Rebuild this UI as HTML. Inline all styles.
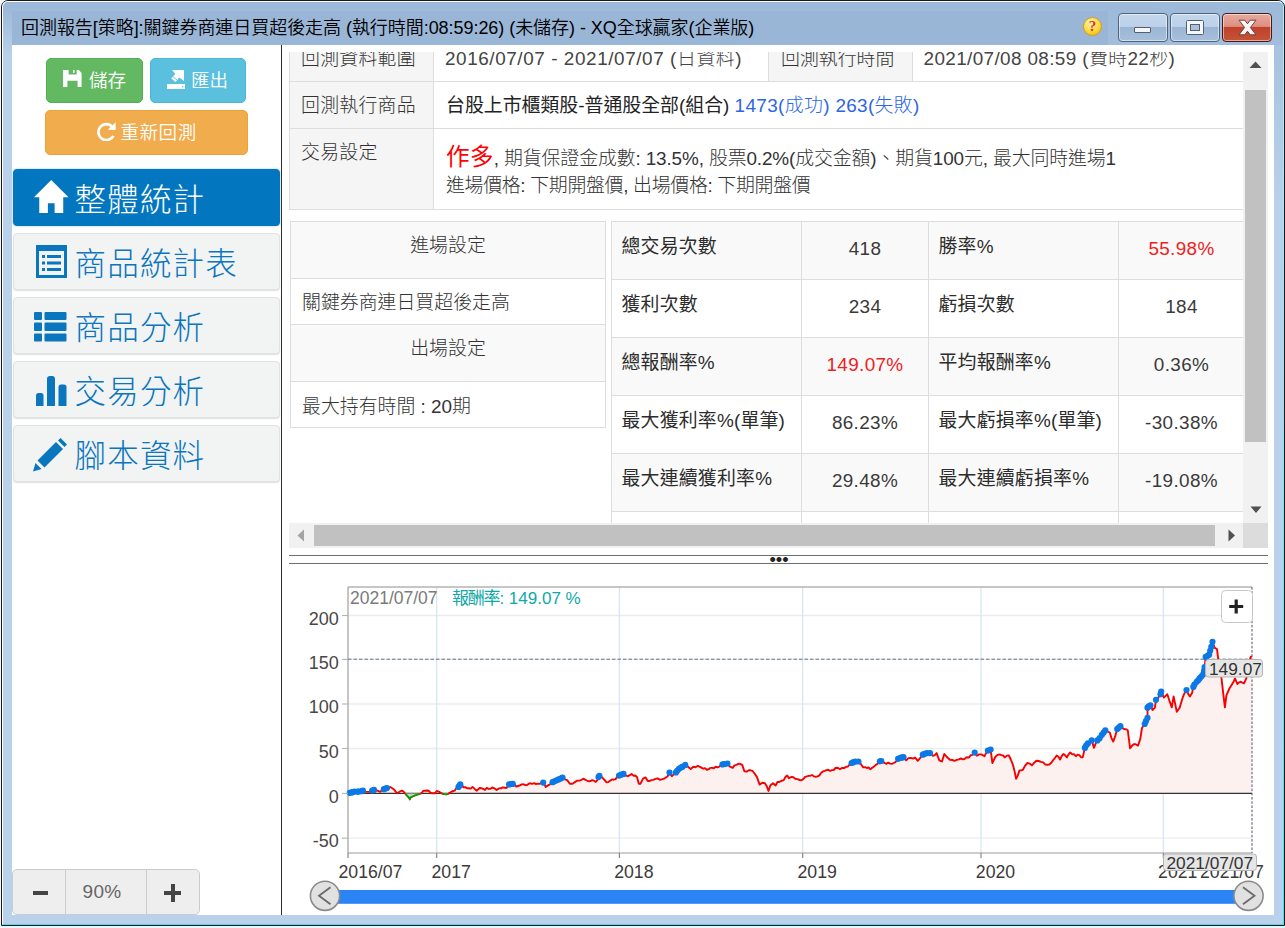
<!DOCTYPE html>
<html lang="zh-Hant">
<head>
<meta charset="utf-8">
<title>回測報告</title>
<style>
*{box-sizing:border-box;margin:0;padding:0}
html,body{width:1285px;height:928px;overflow:hidden;background:#eaf6fb}
body{font-family:"Liberation Sans","Noto Sans CJK TC",sans-serif;color:#333;position:relative;font-size:18.9px}
.a{position:absolute}
/* ---------- window frame ---------- */
#win{position:absolute;left:1px;top:0;width:1284px;height:926px;border:1px solid #1a1a1a;border-radius:7px 7px 0 0;background:#b9d1ea}
#win:before{content:"";position:absolute;left:0;top:0;right:0;bottom:0;border:1px solid #fff;border-right-color:#3fe0f8;border-bottom-color:#3fe0f8;border-radius:6px 6px 0 0}
#tbar{position:absolute;left:12px;top:11px;width:1096px;height:34px;background:#9ab6d7}
#ttop{position:absolute;left:3px;top:2px;width:1280px;height:43px;background:linear-gradient(#9db9d9,#a3bedc);border-radius:5px 5px 0 0}
#tleft{position:absolute;left:3px;top:11px;width:9px;height:45px;background:linear-gradient(#9fbad9,#b9d1ea)}
#tright{position:absolute;left:1274px;top:45px;width:9px;height:160px;background:linear-gradient(#a8c2df,#b9d1ea)}
#title{position:absolute;left:21px;top:12px;font-size:18px;line-height:32px;color:#000;white-space:nowrap;letter-spacing:-.05px;font-weight:350}
#content{position:absolute;left:12px;top:45px;width:1262px;height:870px;background:#fff}
/* caption buttons */
.cb{position:absolute;top:13px;height:29px;width:50px;border:1px solid #4f627c;border-radius:4px;background:linear-gradient(#c3d6ec 0,#bdd1e9 46%,#9bb5d4 50%,#a7c0dc 100%);box-shadow:inset 0 0 0 1px rgba(255,255,255,.5)}
.cb.close{background:linear-gradient(#e6ab9f 0,#dd8f80 46%,#c0422a 50%,#c4543a 100%);border-color:#4a1a18}
/* ---------- sidebar ---------- */
#vline{position:absolute;left:281px;top:45px;width:1px;height:870px;background:#2b2b2b}
.btn{position:absolute;border-radius:5px;color:#fff;font-size:18.5px;font-weight:350;line-height:27px;white-space:nowrap}
.btn span{position:absolute;top:8.4px}
.nav{position:absolute;left:13px;width:267px;height:57px;border-radius:4px;background:#f2f3f3;border:1px solid #e2e2e2;box-shadow:0 1px 1px rgba(0,0,0,.12);color:#0a76be;font-size:31.5px;line-height:46px;font-weight:300;white-space:nowrap}
.nav.on{background:#0277c0;border-color:#0277c0;color:#fff;box-shadow:0 0 2px #8bb8e6}
.nav span{position:absolute;left:60.5px;top:7px;letter-spacing:1.2px}
.nav svg{position:absolute}
#zoom{position:absolute;left:12px;top:869px;width:188px;height:46px;border:1px solid #ccc;border-radius:5px;background:#eee}
#zoom i{position:absolute;top:0;width:1px;height:44px;background:#ccc}
#zoom b{position:absolute;background:#444}
#zoom span{position:absolute;left:49px;width:80px;letter-spacing:.3px;text-align:center;top:8px;font-size:19px;line-height:28px;color:#666;font-weight:400}
/* ---------- tables ---------- */
#scroll{position:absolute;left:289px;top:52px;width:955px;height:471px;overflow:hidden}
.cell{position:absolute;border:1px solid #ddd;white-space:nowrap;font-weight:300;color:#333}
.g{background:#f5f5f5}.s{background:#f9f9f9}
.t{position:absolute;white-space:nowrap;line-height:27px}
.lb{font-weight:400;color:#2c2c2c;letter-spacing:.2px}
.val{text-align:center;font-size:18.9px;font-weight:400;letter-spacing:.35px;color:#3a3a3a}
.red{color:#f0211d}
/* scrollbars */
.sb{position:absolute;background:#f1f1f1}
.th{position:absolute;background:#c1c1c1}
.hl{position:absolute;left:289px;width:979px;height:1px;background:#6f6f6f}
</style>
</head>
<body>
<div class="a" style="left:0;top:0;width:1px;height:926px;background:#f4f4f4"></div>
<div id="win"></div>
<div class="a" style="left:1283px;top:6px;width:1px;height:918px;background:linear-gradient(#b4ecfc,#8fe6fa 40%,#3fe0f8)"></div>
<div id="ttop"></div><div id="tleft"></div><div id="tright"></div>
<div id="tbar"></div>
<div id="title">回測報告[策略]:關鍵券商連日買超後走高 (執行時間:08:59:26) (未儲存) - XQ全球贏家(企業版)</div>
<div class="a" style="left:1083px;top:17px;width:19px;height:19px;border-radius:50%;border:1px solid #d9a018;background:radial-gradient(circle at 40% 30%,#fff6b8 0,#ffd83a 55%,#e9a400 100%);font-family:'Liberation Serif',serif;font-weight:bold;font-size:15px;line-height:17px;text-align:center;color:#d8342a">?</div>
<div class="cb" style="left:1118px"><div class="a" style="left:15px;top:13px;width:17px;height:6px;background:#f4f6f9;border:1px solid #55606f;border-radius:1px"></div></div>
<div class="cb" style="left:1170px"><div class="a" style="left:15px;top:6px;width:18px;height:15px;border:1px solid #55606f;background:#f6f7fa;border-radius:1.5px"></div><div class="a" style="left:19px;top:10px;width:10px;height:7px;border:1px solid #55606f;background:#a9c1dc"></div></div>
<div class="cb close" style="left:1222px">
  <svg class="a" style="left:15px;top:5px" width="19" height="17" viewBox="0 0 19 17"><path d="M1 1.2 H6.800 L9.500 4.800 L12.200 1.200 H18 L12.400 8.500 L18 15.800 H12.200 L9.500 12.200 L6.800 15.800 H1 L6.600 8.500 Z" fill="#f7f7f7" stroke="#6b3330" stroke-width=".9" stroke-linejoin="round"/></svg>
</div>

<div id="content"></div>
<div id="vline"></div>
<div class="btn" style="left:46px;top:58px;width:97px;height:45px;background:#62b962;border:1px solid #55ad55">
  <svg class="a" style="left:16.200px;top:11px" width="18.6" height="17" viewBox="0 0 18.6 17"><path d="M0 0H5.600V4.500H13.700V0H15.900L18.600 2.900V17H14.600V10.700H4.400V17H0Z" fill="#fff"/><rect x="10" y="0" width="1.600" height="2.900" fill="#fff"/></svg>
  <span style="left:42px">儲存</span>
</div>
<div class="btn" style="left:150px;top:58px;width:96px;height:45px;background:#5bbfde;border:1px solid #4db6d8">
  <svg class="a" style="left:16px;top:11px" width="18.4" height="19.2" viewBox="0 0 18.4 19.2"><rect x="0" y="13.900" width="18.400" height="5.200" rx=".4" fill="#fff"/><rect x="15" y="16" width="1.300" height="1.300" fill="#5bbfde"/><path d="M5.200 0H17V11L12.300 7.600L8.600 12L4.200 8.500L8.300 3.900Z" fill="#fff"/><path d="M5.600 6.300L10.300 10.300" stroke="#5bbfde" stroke-width=".9"/></svg>
  <span style="left:40px">匯出</span>
</div>
<div class="btn" style="left:45px;top:110px;width:203px;height:45px;background:#f0ac4d;border:1px solid #eea236">
  <svg class="a" style="left:50.600px;top:10.800px" width="19.5" height="19.5" viewBox="0 0 19.5 19.5"><path d="M14.750 4.150A8 8 0 1 0 16.460 13.860" fill="none" stroke="#fff" stroke-width="2.700"/><path d="M18.600 0.300V8.100L10.800 7.700Z" fill="#fff"/></svg>
  <span style="left:74.5px;letter-spacing:.55px">重新回測</span>
</div>

<div class="nav on" style="top:169px">
  <svg style="left:19.800px;top:9.700px" width="34.5" height="33.5" viewBox="0 0 36 34" preserveAspectRatio="none"><path d="M18 0 L36 17.5 H30.5 V34 H21.5 V23.5 H14.5 V34 H5.5 V17.5 H0 Z" fill="#fff"/></svg>
  <span>整體統計</span>
</div>
<div class="nav" style="top:233px">
  <svg style="left:22px;top:11px" width="31" height="33" viewBox="0 0 31 33"><path fill-rule="evenodd" d="M0 0H31V33H0Z M3 6V30H28V6Z" fill="#0a76be"/><g fill="#0a76be"><rect x="6" y="10" width="3" height="3"/><rect x="11" y="10" width="14" height="3"/><rect x="6" y="16.5" width="3" height="3"/><rect x="11" y="16.5" width="14" height="3"/><rect x="6" y="23" width="3" height="3"/><rect x="11" y="23" width="14" height="3"/></g></svg>
  <span>商品統計表</span>
</div>
<div class="nav" style="top:297px">
  <svg style="left:20px;top:14px" width="33" height="30" viewBox="0 0 33 30"><g fill="#0a76be"><rect x="0" y="0" width="8" height="8" rx="1"/><rect x="10.5" y="0" width="22" height="8" rx="1"/><rect x="0" y="10.5" width="8" height="8.5" rx="1"/><rect x="10.5" y="10.5" width="22" height="8.5" rx="1"/><rect x="0" y="21.5" width="8" height="8" rx="1"/><rect x="10.5" y="21.5" width="22" height="8" rx="1"/></g></svg>
  <span>商品分析</span>
</div>
<div class="nav" style="top:361px">
  <svg style="left:22px;top:14px" width="31" height="30" viewBox="0 0 31 30"><g fill="#0a76be"><path d="M0 30V19.5Q0 17 2.5 17H5Q7.500 17 7.500 19.500V30Z"/><path d="M11 30V3Q11 0 14 0H16Q19 0 19 3V30Z"/><path d="M22.5 30V11Q22.500 8.500 25 8.500H28Q30.500 8.500 30.500 11V30Z"/></g></svg>
  <span>交易分析</span>
</div>
<div class="nav" style="top:425px">
  <svg style="left:19px;top:12px" width="35" height="34" viewBox="0 0 35 34"><g fill="#0a76be"><path d="M0 33.500 L2.500 25 L8.500 31 Z"/><path d="M4.500 22.500 L23 4 L30 11 L11.500 29.500 Z"/><path d="M25 2.500 L27.500 0 L34 6.500 L31.500 9 Z"/></g></svg>
  <span>腳本資料</span>
</div>

<div id="zoom"><i style="left:52px"></i><i style="left:133px"></i>
  <b style="left:20px;top:21px;width:15px;height:4px"></b>
  <b style="left:151px;top:21px;width:17px;height:4px"></b><b style="left:157.500px;top:14px;width:4px;height:18px"></b>
  <span>90%</span>
</div>

<div id="scroll"><div class="a" style="left:-289px;top:-52px;width:1285px;height:928px">
<div class="cell g" style="left:289px;top:34px;width:145px;height:48px;padding:0 0 0 12px;"><div class="t" style="top:9.500px;left:11px;letter-spacing:.25px">回測資料範圍</div></div>
<div class="cell " style="left:433px;top:34px;width:336px;height:48px;padding:0 0 0 12px;"><div class="t" style="top:9.500px;left:11px;letter-spacing:.58px;color:#444">2016/07/07 - 2021/07/07 (日資料)</div></div>
<div class="cell g" style="left:768px;top:34px;width:145px;height:48px;padding:0 0 0 12px;"><div class="t" style="top:9.500px">回測執行時間</div></div>
<div class="cell " style="left:912px;top:34px;width:332px;height:48px;padding:0 0 0 12px;"><div class="t" style="top:9.500px;left:10.500px;letter-spacing:.38px;color:#444">2021/07/08 08:59 (費時22秒)</div></div>
<div class="cell g" style="left:289px;top:81px;width:145px;height:48px;padding:0 0 0 12px;"><div class="t" style="top:10px;left:11px;letter-spacing:.25px">回測執行商品</div></div>
<div class="cell " style="left:433px;top:81px;width:811px;height:48px;padding:0 0 0 12px;"><div class="t" style="top:10px"><b class="lb" style="letter-spacing:0;color:#222">台股上市櫃類股-普通股全部(組合)</b> <span style="color:#2b66e6;letter-spacing:.35px">1473(成功) 263(失敗)</span></div></div>
<div class="cell g" style="left:289px;top:128px;width:145px;height:82px;padding:0 0 0 12px;"><div class="t" style="top:10px;left:11px;letter-spacing:.25px">交易設定</div></div>
<div class="cell " style="left:433px;top:128px;width:811px;height:82px;padding:0 0 0 12px;"><div class="t" style="top:15px;letter-spacing:-.12px"><b style="font-size:23.6px;color:#f00;font-weight:400;letter-spacing:.3px">作多</b>, 期貨保證金成數: 13.5%, 股票0.2%(成交金額)、期貨100元, 最大同時進場1</div><div class="t" style="top:43px;letter-spacing:-.3px">進場價格: 下期開盤價, 出場價格: 下期開盤價</div></div>
<div class="cell s" style="left:290px;top:221px;width:316px;height:58px;padding:0;"><div class="t" style="top:10px;left:0;width:100%;text-align:center">進場設定</div></div>
<div class="cell " style="left:290px;top:278px;width:316px;height:47px;padding:0 0 0 11px;"><div class="t" style="top:9.700px">關鍵券商連日買超後走高</div></div>
<div class="cell s" style="left:290px;top:324px;width:316px;height:58px;padding:0;"><div class="t" style="top:10px;left:0;width:100%;text-align:center">出場設定</div></div>
<div class="cell " style="left:290px;top:381px;width:316px;height:47px;padding:0 0 0 11px;"><div class="t" style="top:10.700px">最大持有時間 : 20期</div></div>
<div class="cell s" style="left:611px;top:221px;width:191px;height:59px;padding:0 0 0 9.500px;"><div class="t lb" style="top:10.500px">總交易次數</div></div>
<div class="cell s" style="left:801px;top:221px;width:128px;height:59px;padding:0;"><div class="t val " style="top:12.500px;left:0;width:100%">418</div></div>
<div class="cell s" style="left:928px;top:221px;width:191px;height:59px;padding:0 0 0 9.500px;"><div class="t lb" style="top:10.500px">勝率%</div></div>
<div class="cell s" style="left:1118px;top:221px;width:127px;height:59px;padding:0;"><div class="t val red" style="top:12.500px;left:0;width:100%">55.98%</div></div>
<div class="cell " style="left:611px;top:279px;width:191px;height:59px;padding:0 0 0 9.500px;"><div class="t lb" style="top:10.500px">獲利次數</div></div>
<div class="cell " style="left:801px;top:279px;width:128px;height:59px;padding:0;"><div class="t val " style="top:12.500px;left:0;width:100%">234</div></div>
<div class="cell " style="left:928px;top:279px;width:191px;height:59px;padding:0 0 0 9.500px;"><div class="t lb" style="top:10.500px">虧損次數</div></div>
<div class="cell " style="left:1118px;top:279px;width:127px;height:59px;padding:0;"><div class="t val " style="top:12.500px;left:0;width:100%">184</div></div>
<div class="cell s" style="left:611px;top:337px;width:191px;height:59px;padding:0 0 0 9.500px;"><div class="t lb" style="top:10.500px">總報酬率%</div></div>
<div class="cell s" style="left:801px;top:337px;width:128px;height:59px;padding:0;"><div class="t val red" style="top:12.500px;left:0;width:100%">149.07%</div></div>
<div class="cell s" style="left:928px;top:337px;width:191px;height:59px;padding:0 0 0 9.500px;"><div class="t lb" style="top:10.500px">平均報酬率%</div></div>
<div class="cell s" style="left:1118px;top:337px;width:127px;height:59px;padding:0;"><div class="t val " style="top:12.500px;left:0;width:100%">0.36%</div></div>
<div class="cell " style="left:611px;top:395px;width:191px;height:59px;padding:0 0 0 9.500px;"><div class="t lb" style="top:10.500px">最大獲利率%(單筆)</div></div>
<div class="cell " style="left:801px;top:395px;width:128px;height:59px;padding:0;"><div class="t val " style="top:12.500px;left:0;width:100%">86.23%</div></div>
<div class="cell " style="left:928px;top:395px;width:191px;height:59px;padding:0 0 0 9.500px;"><div class="t lb" style="top:10.500px">最大虧損率%(單筆)</div></div>
<div class="cell " style="left:1118px;top:395px;width:127px;height:59px;padding:0;"><div class="t val " style="top:12.500px;left:0;width:100%">-30.38%</div></div>
<div class="cell s" style="left:611px;top:453px;width:191px;height:59px;padding:0 0 0 9.500px;"><div class="t lb" style="top:10.500px">最大連續獲利率%</div></div>
<div class="cell s" style="left:801px;top:453px;width:128px;height:59px;padding:0;"><div class="t val " style="top:12.500px;left:0;width:100%">29.48%</div></div>
<div class="cell s" style="left:928px;top:453px;width:191px;height:59px;padding:0 0 0 9.500px;"><div class="t lb" style="top:10.500px">最大連續虧損率%</div></div>
<div class="cell s" style="left:1118px;top:453px;width:127px;height:59px;padding:0;"><div class="t val " style="top:12.500px;left:0;width:100%">-19.08%</div></div>
<div class="cell " style="left:611px;top:511px;width:191px;height:59px;padding:0 0 0 9.500px;"><div class="t lb" style="top:10.500px">最大區間獲利率%</div></div>
<div class="cell " style="left:801px;top:511px;width:128px;height:59px;padding:0;"><div class="t val " style="top:12.500px;left:0;width:100%">182.93%</div></div>
<div class="cell " style="left:928px;top:511px;width:191px;height:59px;padding:0 0 0 9.500px;"><div class="t lb" style="top:10.500px">最大區間虧損率%</div></div>
<div class="cell " style="left:1118px;top:511px;width:127px;height:59px;padding:0;"><div class="t val " style="top:12.500px;left:0;width:100%">-43.12%</div></div>
</div></div>
<div class="sb" style="left:1243px;top:52px;width:25px;height:471px"></div>
<div class="th" style="left:1245px;top:90px;width:21px;height:352px"></div>
<svg class="a" style="left:1249px;top:61px" width="13" height="8"><path d="M6.5 0.5L12.5 7H0.5Z" fill="#505050"/></svg>
<svg class="a" style="left:1250px;top:506px" width="12" height="8"><path d="M0.5 0.5H11.5L6 7Z" fill="#505050"/></svg>
<div class="sb" style="left:289px;top:523px;width:954px;height:25px"></div>
<div class="a" style="left:1243px;top:523px;width:25px;height:25px;background:#dcdcdc"></div>
<div class="th" style="left:314px;top:525px;width:901px;height:21px"></div>
<svg class="a" style="left:297px;top:529px" width="8" height="13"><path d="M7 0.5V12.5L0.5 6.5Z" fill="#a3a3a3"/></svg>
<svg class="a" style="left:1228px;top:529px" width="8" height="13"><path d="M0.5 0.5V12.5L7 6.5Z" fill="#505050"/></svg>
<div class="hl" style="top:555px"></div><div class="hl" style="top:563px"></div>
<div class="a" style="left:769px;top:548.2px;width:20px;height:24px;font-size:18.3px;line-height:24px;color:#222;text-align:center;letter-spacing:0">•••</div>
<svg class="a" style="left:289px;top:565px" width="985" height="350" viewBox="0 0 985 350" font-family="Liberation Sans, Noto Sans CJK TC, sans-serif">
<line x1="59" x2="963" y1="50.5" y2="50.5" stroke="#ececec" stroke-width="1.3"/>
<line x1="59" x2="963" y1="94.4" y2="94.4" stroke="#ececec" stroke-width="1.3"/>
<line x1="59" x2="963" y1="139" y2="139" stroke="#ececec" stroke-width="1.3"/>
<line x1="59" x2="963" y1="183.5" y2="183.5" stroke="#ececec" stroke-width="1.3"/>
<line x1="59" x2="963" y1="273.1" y2="273.1" stroke="#ececec" stroke-width="1.3"/>
<line x1="147.7" x2="147.7" y1="22" y2="288" stroke="#d6e6f2" stroke-width="1.3"/>
<line x1="330.4" x2="330.4" y1="22" y2="288" stroke="#d6e6f2" stroke-width="1.3"/>
<line x1="513.7" x2="513.7" y1="22" y2="288" stroke="#d6e6f2" stroke-width="1.3"/>
<line x1="692" x2="692" y1="22" y2="288" stroke="#d6e6f2" stroke-width="1.3"/>
<line x1="874.3" x2="874.3" y1="22" y2="288" stroke="#d6e6f2" stroke-width="1.3"/>
<polygon points="58.5,228.4 58.5,228.3 60.8,227.6 62.6,227.4 65.3,226.5 67.6,226.2 69.8,226.5 71.9,225.3 73.9,225.7 75.9,226.6 77.8,226.9 80.5,226.9 82.3,225.1 84.1,225.1 85.9,225.5 87.7,225.4 89.5,226.0 91.3,226.9 93.5,224.4 95.7,223.9 97.9,223.0 99.6,223.0 101.2,222.0 102.9,223.0 104.7,224.2 106.3,226.1 107.9,228.3 111.0,226.5 112.8,225.6 114.5,226.5 115.8,228.2 116.5,228.9 118.1,230.7 119.9,232.6 120.8,234.1 121.7,232.1 124.4,231.0 127.1,229.9 129.8,229.2 131.5,228.7 132.6,228.0 134.3,225.9 136.0,225.7 137.8,225.5 139.6,225.7 141.4,227.7 143.2,228.3 145.9,228.3 147.7,226.0 150.3,226.9 152.3,228.2 153.4,228.7 155.7,229.1 157.5,229.3 159.1,228.9 160.2,228.0 162.9,226.5 165.6,225.7 167.3,223.3 170.0,221.2 171.3,219.4 172.9,220.1 174.5,222.4 176.3,222.1 178.1,223.3 179.9,223.3 181.7,223.6 183.5,221.9 185.7,223.9 187.9,225.7 190.6,223.0 192.4,223.2 194.2,223.9 196.0,224.9 197.8,222.9 199.6,223.9 201.3,223.9 203.1,222.4 205.4,223.3 207.6,225.1 209.9,223.4 212.1,223.3 213.9,222.4 215.7,222.7 217.5,223.0 220.1,219.4 221.9,219.8 223.7,218.9 225.5,219.5 227.3,221.5 229.1,221.0 230.9,220.4 232.7,219.4 234.5,219.3 236.3,220.0 238.0,220.1 239.8,218.7 241.6,218.3 243.4,218.9 245.2,218.2 247.0,219.2 248.8,218.7 250.6,218.9 252.4,217.8 254.2,217.6 256.8,221.9 259.5,220.1 261.8,218.8 264.0,217.1 265.8,216.1 267.6,214.8 269.4,214.4 271.4,214.1 273.5,212.6 275.8,214.3 278.2,215.1 280.8,218.7 283.5,218.7 286.2,216.9 288.3,215.6 290.4,215.6 292.5,214.8 294.3,213.7 296.1,214.6 297.8,215.5 299.6,216.3 301.4,216.1 303.2,215.1 305.0,215.7 306.8,216.9 308.4,215.1 310.0,211.2 312.0,211.4 314.0,213.3 315.7,215.2 317.5,217.4 319.3,217.1 321.1,215.7 322.9,214.4 324.7,214.7 326.5,214.2 328.3,211.4 330.1,210.6 332.3,210.1 334.5,208.9 336.8,210.6 339.0,211.2 340.8,210.2 342.6,208.9 344.4,210.7 346.2,210.5 348.0,211.9 349.8,218.7 351.5,218.7 354.2,213.3 356.6,212.4 358.7,216.0 360.5,216.0 362.3,215.1 364.1,214.9 365.9,214.2 368.5,213.3 371.2,214.8 373.5,214.2 375.7,213.3 378.4,211.5 380.5,207.6 382.9,211.2 385.1,209.0 387.3,207.1 390.0,203.5 391.8,203.3 393.6,201.7 396.3,199.9 399.0,201.7 401.7,204.0 404.3,201.7 406.6,202.2 408.8,200.8 410.6,201.6 412.4,202.6 414.2,203.7 416.0,203.1 417.8,204.7 419.6,204.3 421.3,202.9 423.1,202.9 424.9,203.2 426.7,201.7 428.5,202.4 430.3,201.7 431.9,200.1 433.5,199.4 435.1,198.8 436.7,199.1 438.4,198.5 441.0,201.7 443.7,202.9 445.5,200.4 447.3,199.9 450.0,198.6 451.6,199.2 453.2,199.9 455.4,206.2 458.0,206.5 459.8,205.2 461.6,205.3 463.4,205.8 465.2,208.0 467.9,211.9 470.6,219.6 473.3,217.8 475.9,218.3 477.7,221.1 479.5,225.9 481.3,220.5 484.0,218.3 486.7,220.5 488.5,216.9 490.3,217.0 492.0,216.0 494.7,215.1 496.4,212.0 498.2,210.5 499.9,213.2 502.6,211.9 504.4,212.3 506.2,213.7 508.5,214.1 510.7,215.0 512.5,215.3 514.3,214.1 516.1,211.8 517.8,211.4 519.6,210.9 521.4,210.7 523.2,210.1 525.0,211.4 526.8,211.7 528.6,211.4 530.4,210.4 532.2,207.8 534.0,206.4 535.7,205.8 537.5,205.1 539.3,204.8 541.1,206.0 542.9,205.1 544.7,205.0 546.5,203.0 548.7,202.8 551.0,204.2 553.2,202.9 555.4,203.0 557.2,201.7 559.0,201.5 560.8,199.2 562.6,198.0 564.4,197.2 566.2,196.5 567.8,196.7 569.4,196.5 572.4,199.7 574.2,202.4 576.0,202.2 577.8,203.0 579.6,202.5 581.4,204.2 583.2,202.7 585.0,201.5 586.8,199.9 588.5,198.9 591.6,196.2 593.6,197.2 595.7,198.0 597.5,198.8 599.3,197.6 601.1,198.6 602.9,198.9 604.7,198.0 606.4,197.1 608.2,195.5 610.0,193.5 612.3,193.2 614.5,192.2 617.2,195.3 619.4,193.1 621.7,192.9 623.9,193.6 626.1,192.6 628.8,195.8 631.5,192.6 634.2,189.4 636.0,189.4 637.8,188.1 639.4,188.9 641.0,188.1 644.0,190.8 645.8,190.1 647.6,188.1 650.3,195.3 653.0,196.5 655.3,189.0 658.4,192.6 661.0,194.7 663.3,195.0 665.5,195.8 667.7,194.9 670.0,194.4 671.8,193.4 673.6,194.4 675.4,194.0 677.6,192.3 679.8,192.6 681.6,190.3 683.4,189.9 685.7,187.6 687.9,190.8 690.1,189.4 692.4,189.4 695.5,191.2 697.2,187.7 698.9,185.6 701.6,184.5 703.4,198.0 705.1,194.3 706.8,191.2 708.7,189.9 710.6,189.4 712.4,190.1 714.1,190.5 715.8,192.4 717.9,190.6 719.9,190.5 721.8,194.5 723.7,199.1 725.4,205.4 727.1,213.8 728.8,210.4 730.5,205.4 732.2,205.4 733.9,204.8 736.1,200.6 738.4,198.0 740.7,198.6 742.9,200.3 745.2,197.7 747.4,195.7 749.7,196.0 751.9,196.9 754.2,197.4 756.4,199.6 758.3,199.8 760.2,199.6 762.1,198.0 764.0,195.4 765.9,193.0 767.7,190.5 769.4,191.7 771.1,194.6 772.8,190.9 774.5,189.0 776.2,190.3 777.9,192.4 779.6,189.4 781.3,187.4 783.2,189.4 785.0,189.2 786.9,191.2 788.6,189.6 790.3,190.1 792.0,192.2 793.7,192.4 795.9,182.9 798.9,178.4 800.8,177.0 802.7,175.4 805.0,182.9 806.7,178.4 808.4,175.4 810.6,172.7 812.9,169.8 814.6,166.5 816.3,165.3 818.5,166.5 820.8,167.5 822.5,173.1 824.2,176.6 826.2,171.2 828.2,164.1 831.4,161.2 833.4,163.1 835.4,164.1 837.1,164.2 838.8,165.3 841.1,183.3 842.8,181.0 844.5,179.3 846.7,179.2 849.0,180.6 851.2,174.3 853.0,163.0 855.7,158.5 858.5,152.9 858.5,142.7 861.4,140.4 863.6,145.0 865.9,142.7 867.0,134.8 869.3,132.6 871.5,129.2 872.2,126.5 874.9,132.5 876.6,130.9 878.3,129.2 880.6,136.3 882.8,142.3 884.6,131.4 887.8,146.8 890.7,142.7 892.4,136.7 894.1,131.4 895.8,127.7 897.5,125.1 899.2,128.9 900.9,131.4 903.1,128.0 904.3,121.3 906.0,120.1 907.7,116.8 909.3,115.6 911.0,112.9 912.7,111.6 914.4,108.9 915.6,102.1 916.7,91.9 918.4,91.5 920.1,89.7 922.3,81.8 923.5,76.8 925.7,82.9 928.0,84.0 929.1,93.1 930.7,104.3 932.5,113.4 934.3,129.2 935.9,142.3 937.4,130.3 940.4,123.5 942.6,120.1 944.3,117.3 946.0,113.4 948.3,119.0 950.0,117.3 951.7,116.8 953.4,117.6 955.0,118.3 957.3,113.4 959.6,97.6 961.8,91.9 962.9,91.2 962.9,228.4" fill="#fdf1ef"/>
<path d="M59 22V288H963" fill="none" stroke="#9c9c9c" stroke-width="1.15"/>
<line x1="59" x2="963" y1="22" y2="22" stroke="#8e8e8e" stroke-width="1.15"/>
<line x1="59" x2="963" y1="228.4" y2="228.4" stroke="#333" stroke-width="1.4"/>
<line x1="59" x2="963" y1="94.2" y2="94.2" stroke="#5c6a8a" stroke-width=".95" stroke-dasharray="3.5,2"/>
<line x1="963" x2="963" y1="22" y2="288" stroke="#4f5878" stroke-width="1" stroke-dasharray="2.6,1.6"/>
<polyline points="58.5,228.3 60.8,227.6 62.6,227.4 65.3,226.5 67.6,226.2 69.8,226.5 71.9,225.3 73.9,225.7 75.9,226.6 77.8,226.9 80.5,226.9 82.3,225.1 84.1,225.1 85.9,225.5 87.7,225.4 89.5,226.0 91.3,226.9 93.5,224.4 95.7,223.9 97.9,223.0 99.6,223.0 101.2,222.0 102.9,223.0 104.7,224.2 106.3,226.1 107.9,228.3 111.0,226.5 112.8,225.6 114.5,226.5 115.8,228.2 116.5,228.9 118.1,230.7 119.9,232.6 120.8,234.1 121.7,232.1 124.4,231.0 127.1,229.9 129.8,229.2 131.5,228.7 132.6,228.0 134.3,225.9 136.0,225.7 137.8,225.5 139.6,225.7 141.4,227.7 143.2,228.3 145.9,228.3 147.7,226.0 150.3,226.9 152.3,228.2 153.4,228.7 155.7,229.1 157.5,229.3 159.1,228.9 160.2,228.0 162.9,226.5 165.6,225.7 167.3,223.3 170.0,221.2 171.3,219.4 172.9,220.1 174.5,222.4 176.3,222.1 178.1,223.3 179.9,223.3 181.7,223.6 183.5,221.9 185.7,223.9 187.9,225.7 190.6,223.0 192.4,223.2 194.2,223.9 196.0,224.9 197.8,222.9 199.6,223.9 201.3,223.9 203.1,222.4 205.4,223.3 207.6,225.1 209.9,223.4 212.1,223.3 213.9,222.4 215.7,222.7 217.5,223.0 220.1,219.4 221.9,219.8 223.7,218.9 225.5,219.5 227.3,221.5 229.1,221.0 230.9,220.4 232.7,219.4 234.5,219.3 236.3,220.0 238.0,220.1 239.8,218.7 241.6,218.3 243.4,218.9 245.2,218.2 247.0,219.2 248.8,218.7 250.6,218.9 252.4,217.8 254.2,217.6 256.8,221.9 259.5,220.1 261.8,218.8 264.0,217.1 265.8,216.1 267.6,214.8 269.4,214.4 271.4,214.1 273.5,212.6 275.8,214.3 278.2,215.1 280.8,218.7 283.5,218.7 286.2,216.9 288.3,215.6 290.4,215.6 292.5,214.8 294.3,213.7 296.1,214.6 297.8,215.5 299.6,216.3 301.4,216.1 303.2,215.1 305.0,215.7 306.8,216.9 308.4,215.1 310.0,211.2 312.0,211.4 314.0,213.3 315.7,215.2 317.5,217.4 319.3,217.1 321.1,215.7 322.9,214.4 324.7,214.7 326.5,214.2 328.3,211.4 330.1,210.6 332.3,210.1 334.5,208.9 336.8,210.6 339.0,211.2 340.8,210.2 342.6,208.9 344.4,210.7 346.2,210.5 348.0,211.9 349.8,218.7 351.5,218.7 354.2,213.3 356.6,212.4 358.7,216.0 360.5,216.0 362.3,215.1 364.1,214.9 365.9,214.2 368.5,213.3 371.2,214.8 373.5,214.2 375.7,213.3 378.4,211.5 380.5,207.6 382.9,211.2 385.1,209.0 387.3,207.1 390.0,203.5 391.8,203.3 393.6,201.7 396.3,199.9 399.0,201.7 401.7,204.0 404.3,201.7 406.6,202.2 408.8,200.8 410.6,201.6 412.4,202.6 414.2,203.7 416.0,203.1 417.8,204.7 419.6,204.3 421.3,202.9 423.1,202.9 424.9,203.2 426.7,201.7 428.5,202.4 430.3,201.7 431.9,200.1 433.5,199.4 435.1,198.8 436.7,199.1 438.4,198.5 441.0,201.7 443.7,202.9 445.5,200.4 447.3,199.9 450.0,198.6 451.6,199.2 453.2,199.9 455.4,206.2 458.0,206.5 459.8,205.2 461.6,205.3 463.4,205.8 465.2,208.0 467.9,211.9 470.6,219.6 473.3,217.8 475.9,218.3 477.7,221.1 479.5,225.9 481.3,220.5 484.0,218.3 486.7,220.5 488.5,216.9 490.3,217.0 492.0,216.0 494.7,215.1 496.4,212.0 498.2,210.5 499.9,213.2 502.6,211.9 504.4,212.3 506.2,213.7 508.5,214.1 510.7,215.0 512.5,215.3 514.3,214.1 516.1,211.8 517.8,211.4 519.6,210.9 521.4,210.7 523.2,210.1 525.0,211.4 526.8,211.7 528.6,211.4 530.4,210.4 532.2,207.8 534.0,206.4 535.7,205.8 537.5,205.1 539.3,204.8 541.1,206.0 542.9,205.1 544.7,205.0 546.5,203.0 548.7,202.8 551.0,204.2 553.2,202.9 555.4,203.0 557.2,201.7 559.0,201.5 560.8,199.2 562.6,198.0 564.4,197.2 566.2,196.5 567.8,196.7 569.4,196.5 572.4,199.7 574.2,202.4 576.0,202.2 577.8,203.0 579.6,202.5 581.4,204.2 583.2,202.7 585.0,201.5 586.8,199.9 588.5,198.9 591.6,196.2 593.6,197.2 595.7,198.0 597.5,198.8 599.3,197.6 601.1,198.6 602.9,198.9 604.7,198.0 606.4,197.1 608.2,195.5 610.0,193.5 612.3,193.2 614.5,192.2 617.2,195.3 619.4,193.1 621.7,192.9 623.9,193.6 626.1,192.6 628.8,195.8 631.5,192.6 634.2,189.4 636.0,189.4 637.8,188.1 639.4,188.9 641.0,188.1 644.0,190.8 645.8,190.1 647.6,188.1 650.3,195.3 653.0,196.5 655.3,189.0 658.4,192.6 661.0,194.7 663.3,195.0 665.5,195.8 667.7,194.9 670.0,194.4 671.8,193.4 673.6,194.4 675.4,194.0 677.6,192.3 679.8,192.6 681.6,190.3 683.4,189.9 685.7,187.6 687.9,190.8 690.1,189.4 692.4,189.4 695.5,191.2 697.2,187.7 698.9,185.6 701.6,184.5 703.4,198.0 705.1,194.3 706.8,191.2 708.7,189.9 710.6,189.4 712.4,190.1 714.1,190.5 715.8,192.4 717.9,190.6 719.9,190.5 721.8,194.5 723.7,199.1 725.4,205.4 727.1,213.8 728.8,210.4 730.5,205.4 732.2,205.4 733.9,204.8 736.1,200.6 738.4,198.0 740.7,198.6 742.9,200.3 745.2,197.7 747.4,195.7 749.7,196.0 751.9,196.9 754.2,197.4 756.4,199.6 758.3,199.8 760.2,199.6 762.1,198.0 764.0,195.4 765.9,193.0 767.7,190.5 769.4,191.7 771.1,194.6 772.8,190.9 774.5,189.0 776.2,190.3 777.9,192.4 779.6,189.4 781.3,187.4 783.2,189.4 785.0,189.2 786.9,191.2 788.6,189.6 790.3,190.1 792.0,192.2 793.7,192.4 795.9,182.9 798.9,178.4 800.8,177.0 802.7,175.4 805.0,182.9 806.7,178.4 808.4,175.4 810.6,172.7 812.9,169.8 814.6,166.5 816.3,165.3 818.5,166.5 820.8,167.5 822.5,173.1 824.2,176.6 826.2,171.2 828.2,164.1 831.4,161.2 833.4,163.1 835.4,164.1 837.1,164.2 838.8,165.3 841.1,183.3 842.8,181.0 844.5,179.3 846.7,179.2 849.0,180.6 851.2,174.3 853.0,163.0 855.7,158.5 858.5,152.9 858.5,142.7 861.4,140.4 863.6,145.0 865.9,142.7 867.0,134.8 869.3,132.6 871.5,129.2 872.2,126.5 874.9,132.5 876.6,130.9 878.3,129.2 880.6,136.3 882.8,142.3 884.6,131.4 887.8,146.8 890.7,142.7 892.4,136.7 894.1,131.4 895.8,127.7 897.5,125.1 899.2,128.9 900.9,131.4 903.1,128.0 904.3,121.3 906.0,120.1 907.7,116.8 909.3,115.6 911.0,112.9 912.7,111.6 914.4,108.9 915.6,102.1 916.7,91.9 918.4,91.5 920.1,89.7 922.3,81.8 923.5,76.8 925.7,82.9 928.0,84.0 929.1,93.1 930.7,104.3 932.5,113.4 934.3,129.2 935.9,142.3 937.4,130.3 940.4,123.5 942.6,120.1 944.3,117.3 946.0,113.4 948.3,119.0 950.0,117.3 951.7,116.8 953.4,117.6 955.0,118.3 957.3,113.4 959.6,97.6 961.8,91.9 962.9,91.2" fill="none" stroke="#f60000" stroke-width="1.9" stroke-linejoin="round"/>
<polygon points="116.5,228.4 116.5,228.9 118.1,230.7 119.9,232.6 120.8,234.1 121.7,232.1 124.4,231.0 127.1,229.9 129.8,229.2 131.5,228.7 131.5,228.4" fill="#bfe3bf"/>
<polyline points="116.5,228.9 118.1,230.7 119.9,232.6 120.8,234.1 121.7,232.1 124.4,231.0 127.1,229.9 129.8,229.2 131.5,228.7" fill="none" stroke="#0a9a0a" stroke-width="1.8"/>
<polygon points="153.4,228.4 153.4,228.7 155.7,229.1 157.5,229.3 159.1,228.9 159.1,228.4" fill="#bfe3bf"/>
<polyline points="153.4,228.7 155.7,229.1 157.5,229.3 159.1,228.9" fill="none" stroke="#0a9a0a" stroke-width="1.8"/>
<circle cx="60.8" cy="227.8" r="3.1" fill="#0a78e6"/>
<circle cx="62.6" cy="227.4" r="3.1" fill="#0a78e6"/>
<circle cx="63.9" cy="227.1" r="3.1" fill="#0a78e6"/>
<circle cx="65.3" cy="226.5" r="3.1" fill="#0a78e6"/>
<circle cx="68.5" cy="226.7" r="3.1" fill="#0a78e6"/>
<circle cx="69.8" cy="226.5" r="3.1" fill="#0a78e6"/>
<circle cx="72.5" cy="226.2" r="3.1" fill="#0a78e6"/>
<circle cx="73.9" cy="225.7" r="3.1" fill="#0a78e6"/>
<circle cx="83.2" cy="225.5" r="3.1" fill="#0a78e6"/>
<circle cx="85.0" cy="224.9" r="3.1" fill="#0a78e6"/>
<circle cx="94.9" cy="224.2" r="3.1" fill="#0a78e6"/>
<circle cx="96.6" cy="223.5" r="3.1" fill="#0a78e6"/>
<circle cx="97.9" cy="223.0" r="3.1" fill="#0a78e6"/>
<circle cx="169.5" cy="221.9" r="3.1" fill="#0a78e6"/>
<circle cx="170.6" cy="220.5" r="3.1" fill="#0a78e6"/>
<circle cx="171.3" cy="219.4" r="3.1" fill="#0a78e6"/>
<circle cx="220.1" cy="219.4" r="3.1" fill="#0a78e6"/>
<circle cx="221.9" cy="219.0" r="3.1" fill="#0a78e6"/>
<circle cx="223.7" cy="218.9" r="3.1" fill="#0a78e6"/>
<circle cx="254.2" cy="217.6" r="3.1" fill="#0a78e6"/>
<circle cx="263.6" cy="217.2" r="3.1" fill="#0a78e6"/>
<circle cx="265.4" cy="216.3" r="3.1" fill="#0a78e6"/>
<circle cx="267.6" cy="215.3" r="3.1" fill="#0a78e6"/>
<circle cx="269.7" cy="214.4" r="3.1" fill="#0a78e6"/>
<circle cx="271.7" cy="213.5" r="3.1" fill="#0a78e6"/>
<circle cx="273.5" cy="212.6" r="3.1" fill="#0a78e6"/>
<circle cx="309.5" cy="212.1" r="3.1" fill="#0a78e6"/>
<circle cx="310.4" cy="210.8" r="3.1" fill="#0a78e6"/>
<circle cx="330.1" cy="210.6" r="3.1" fill="#0a78e6"/>
<circle cx="332.2" cy="209.7" r="3.1" fill="#0a78e6"/>
<circle cx="334.5" cy="208.9" r="3.1" fill="#0a78e6"/>
<circle cx="380.5" cy="207.6" r="3.1" fill="#0a78e6"/>
<circle cx="387.0" cy="207.4" r="3.1" fill="#0a78e6"/>
<circle cx="388.2" cy="205.8" r="3.1" fill="#0a78e6"/>
<circle cx="390.0" cy="203.8" r="3.1" fill="#0a78e6"/>
<circle cx="391.8" cy="202.6" r="3.1" fill="#0a78e6"/>
<circle cx="393.6" cy="201.7" r="3.1" fill="#0a78e6"/>
<circle cx="396.3" cy="199.9" r="3.1" fill="#0a78e6"/>
<circle cx="433.5" cy="199.4" r="3.1" fill="#0a78e6"/>
<circle cx="435.7" cy="199.0" r="3.1" fill="#0a78e6"/>
<circle cx="438.4" cy="198.5" r="3.1" fill="#0a78e6"/>
<circle cx="562.6" cy="198.0" r="3.1" fill="#0a78e6"/>
<circle cx="564.4" cy="197.2" r="3.1" fill="#0a78e6"/>
<circle cx="566.2" cy="196.5" r="3.1" fill="#0a78e6"/>
<circle cx="569.4" cy="196.5" r="3.1" fill="#0a78e6"/>
<circle cx="590.9" cy="196.3" r="3.1" fill="#0a78e6"/>
<circle cx="592.3" cy="196.0" r="3.1" fill="#0a78e6"/>
<circle cx="609.1" cy="193.8" r="3.1" fill="#0a78e6"/>
<circle cx="611.3" cy="192.9" r="3.1" fill="#0a78e6"/>
<circle cx="613.1" cy="192.4" r="3.1" fill="#0a78e6"/>
<circle cx="614.5" cy="192.2" r="3.1" fill="#0a78e6"/>
<circle cx="633.8" cy="189.7" r="3.1" fill="#0a78e6"/>
<circle cx="635.6" cy="188.8" r="3.1" fill="#0a78e6"/>
<circle cx="637.8" cy="188.1" r="3.1" fill="#0a78e6"/>
<circle cx="641.0" cy="188.1" r="3.1" fill="#0a78e6"/>
<circle cx="685.7" cy="187.6" r="3.1" fill="#0a78e6"/>
<circle cx="698.9" cy="185.6" r="3.1" fill="#0a78e6"/>
<circle cx="701.6" cy="184.5" r="3.1" fill="#0a78e6"/>
<circle cx="795.9" cy="182.9" r="3.1" fill="#0a78e6"/>
<circle cx="797.1" cy="180.6" r="3.1" fill="#0a78e6"/>
<circle cx="798.9" cy="178.4" r="3.1" fill="#0a78e6"/>
<circle cx="802.7" cy="175.4" r="3.1" fill="#0a78e6"/>
<circle cx="808.4" cy="175.4" r="3.1" fill="#0a78e6"/>
<circle cx="810.6" cy="173.2" r="3.1" fill="#0a78e6"/>
<circle cx="812.9" cy="169.8" r="3.1" fill="#0a78e6"/>
<circle cx="814.7" cy="167.5" r="3.1" fill="#0a78e6"/>
<circle cx="816.3" cy="165.3" r="3.1" fill="#0a78e6"/>
<circle cx="828.2" cy="164.1" r="3.1" fill="#0a78e6"/>
<circle cx="829.8" cy="162.6" r="3.1" fill="#0a78e6"/>
<circle cx="831.4" cy="161.2" r="3.1" fill="#0a78e6"/>
<circle cx="855.7" cy="159.0" r="3.1" fill="#0a78e6"/>
<circle cx="856.9" cy="156.2" r="3.1" fill="#0a78e6"/>
<circle cx="858.5" cy="152.9" r="3.1" fill="#0a78e6"/>
<circle cx="858.5" cy="142.7" r="3.1" fill="#0a78e6"/>
<circle cx="859.8" cy="141.4" r="3.1" fill="#0a78e6"/>
<circle cx="861.4" cy="140.4" r="3.1" fill="#0a78e6"/>
<circle cx="867.0" cy="134.8" r="3.1" fill="#0a78e6"/>
<circle cx="871.5" cy="129.2" r="3.1" fill="#0a78e6"/>
<circle cx="872.2" cy="126.5" r="3.1" fill="#0a78e6"/>
<circle cx="897.5" cy="125.1" r="3.1" fill="#0a78e6"/>
<circle cx="904.3" cy="121.9" r="3.1" fill="#0a78e6"/>
<circle cx="905.4" cy="119.7" r="3.1" fill="#0a78e6"/>
<circle cx="907.7" cy="116.8" r="3.1" fill="#0a78e6"/>
<circle cx="909.5" cy="114.9" r="3.1" fill="#0a78e6"/>
<circle cx="911.0" cy="112.9" r="3.1" fill="#0a78e6"/>
<circle cx="912.8" cy="111.1" r="3.1" fill="#0a78e6"/>
<circle cx="914.4" cy="108.9" r="3.1" fill="#0a78e6"/>
<circle cx="915.1" cy="105.5" r="3.1" fill="#0a78e6"/>
<circle cx="915.6" cy="102.1" r="3.1" fill="#0a78e6"/>
<circle cx="916.7" cy="91.9" r="3.1" fill="#0a78e6"/>
<circle cx="918.5" cy="90.8" r="3.1" fill="#0a78e6"/>
<circle cx="920.1" cy="89.7" r="3.1" fill="#0a78e6"/>
<circle cx="921.2" cy="85.8" r="3.1" fill="#0a78e6"/>
<circle cx="922.3" cy="81.8" r="3.1" fill="#0a78e6"/>
<circle cx="923.5" cy="76.8" r="3.1" fill="#0a78e6"/>
<line x1="53" x2="59" y1="50.5" y2="50.5" stroke="#b4b4b4" stroke-width="1.1"/>
<text x="49.8" y="59.7" text-anchor="end" font-size="18" fill="#4a4646">200</text>
<line x1="53" x2="59" y1="94.4" y2="94.4" stroke="#b4b4b4" stroke-width="1.1"/>
<text x="49.8" y="103.6" text-anchor="end" font-size="18" fill="#4a4646">150</text>
<line x1="53" x2="59" y1="139" y2="139" stroke="#b4b4b4" stroke-width="1.1"/>
<text x="49.8" y="148.2" text-anchor="end" font-size="18" fill="#4a4646">100</text>
<line x1="53" x2="59" y1="183.5" y2="183.5" stroke="#b4b4b4" stroke-width="1.1"/>
<text x="49.8" y="192.7" text-anchor="end" font-size="18" fill="#4a4646">50</text>
<line x1="53" x2="59" y1="228.4" y2="228.4" stroke="#b4b4b4" stroke-width="1.1"/>
<text x="49.8" y="237.6" text-anchor="end" font-size="18" fill="#4a4646">0</text>
<line x1="53" x2="59" y1="273.1" y2="273.1" stroke="#b4b4b4" stroke-width="1.1"/>
<text x="49.8" y="282.3" text-anchor="end" font-size="18" fill="#4a4646">-50</text>
<line x1="59" x2="59" y1="288" y2="293" stroke="#888" stroke-width="1.2"/>
<text x="49.5" y="313" font-size="17.700" fill="#3c3a3a">2016/07</text>
<line x1="147.7" x2="147.7" y1="288" y2="293" stroke="#888" stroke-width="1.2"/>
<text x="142.5" y="313" font-size="17.700" fill="#3c3a3a">2017</text>
<line x1="330.4" x2="330.4" y1="288" y2="293" stroke="#888" stroke-width="1.2"/>
<text x="325.2" y="313" font-size="17.700" fill="#3c3a3a">2018</text>
<line x1="513.7" x2="513.7" y1="288" y2="293" stroke="#888" stroke-width="1.2"/>
<text x="508.5" y="313" font-size="17.700" fill="#3c3a3a">2019</text>
<line x1="692" x2="692" y1="288" y2="293" stroke="#888" stroke-width="1.2"/>
<text x="686.8" y="313" font-size="17.700" fill="#3c3a3a">2020</text>
<line x1="874.3" x2="874.3" y1="288" y2="293" stroke="#888" stroke-width="1.2"/>
<text x="869.1" y="313" font-size="17.700" fill="#3c3a3a">2021</text>
<text x="911" y="313" font-size="17.700" fill="#3c3a3a">2021/07</text>
<text x="61" y="39" font-size="17.5" fill="#7a7a7a">2021/07/07</text>
<text x="163" y="39" font-size="17" fill="#10a8a8" letter-spacing="-1.2">報酬率<tspan letter-spacing="0">: 149.07 %</tspan></text>
<rect x="916.5" y="94.5" width="57" height="17.5" rx="3" fill="#e6e6e6" stroke="#b5b5b5" stroke-width="1"/>
<text x="920" y="109.7" font-size="17.3" fill="#333">149.07</text>
<rect x="874.5" y="289" width="93" height="16.5" rx="3" fill="#e6e6e6" stroke="#b5b5b5" stroke-width="1"/>
<text x="877.5" y="303.7" font-size="17.3" fill="#333">2021/07/07</text>
<rect x="932.5" y="25.5" width="31" height="32" rx="4" fill="#fff" stroke="#c8c8c8" stroke-width="1"/>
<path d="M940.2 41.5h14M947.2 34.5v14" stroke="#222" stroke-width="3.2"/>
<rect x="36" y="325" width="923" height="13.800" fill="#2a84f6"/>
<circle cx="36" cy="330.8" r="14.6" fill="#e1e1e1" stroke="#8a8a8a" stroke-width="1.6"/>
<path d="M41.5 322.3l-11.5 8.5l11.5 8.500" fill="none" stroke="#6a6a6a" stroke-width="1.8"/>
<circle cx="959.5" cy="330.8" r="14.6" fill="#e1e1e1" stroke="#8a8a8a" stroke-width="1.6"/>
<path d="M954 322.3l11.5 8.5l-11.5 8.500" fill="none" stroke="#6a6a6a" stroke-width="1.8"/>
</svg>
</body>
</html>
